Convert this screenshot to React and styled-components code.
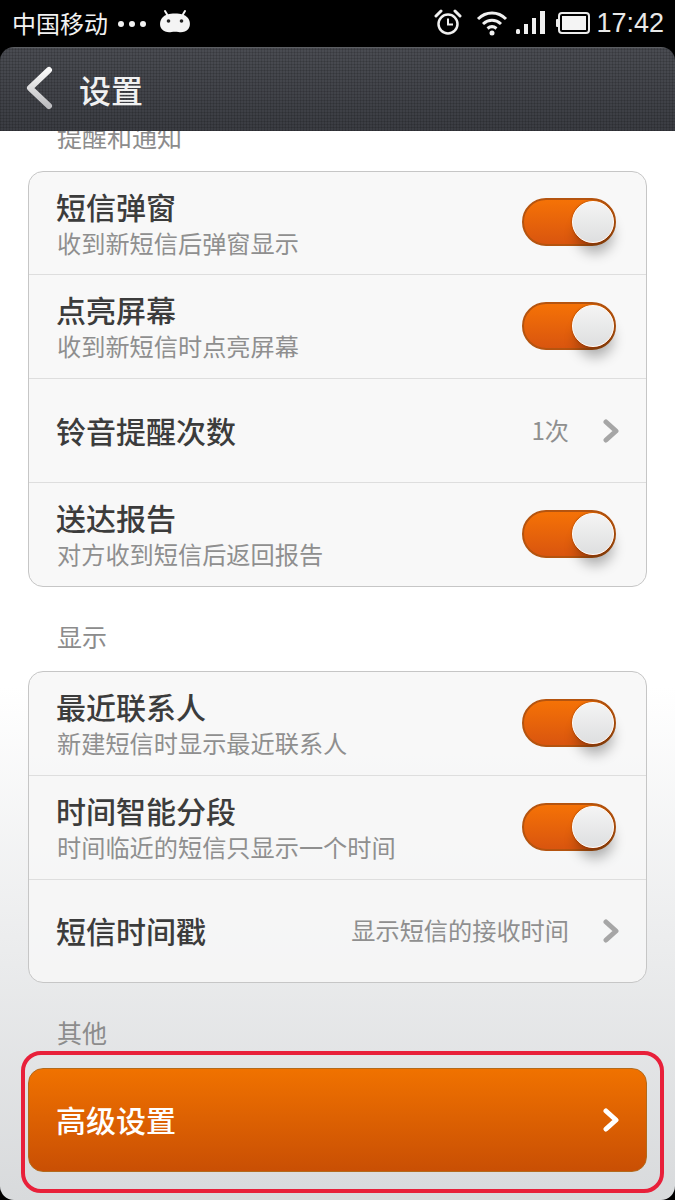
import React from 'react'
import styled, { createGlobalStyle } from 'styled-components'

const GlobalStyle = createGlobalStyle`
  html, body {
    margin: 0;
    padding: 0;
    background: #000;
  }
  * {
    box-sizing: border-box;
  }
`

const Page = styled.div`
  position: relative;
  width: 675px;
  height: 1200px;
  display: flex;
  flex-direction: column;
  background: #000;
  overflow: hidden;
  font-family: "Noto Sans CJK SC", "Liberation Sans", sans-serif;
`

const StatusBar = styled.div`
  height: 47px;
  flex: none;
  display: flex;
  align-items: center;
  padding: 0 11px 0 12px;
  color: #f2f2f2;
`
const Carrier = styled.span`
  font-size: 24px;
  line-height: 47px;
  margin-top: -2px;
`
const Dots = styled.div`
  display: flex;
  gap: 5px;
  margin-left: 10px;
`
const Dot = styled.i`
  width: 6px;
  height: 6px;
  border-radius: 50%;
  background: #f2f2f2;
`
const BotIcon = styled.svg`
  width: 34px;
  height: 26px;
  margin-left: 12px;
  margin-top: -4px;
`
const StatusRight = styled.div`
  margin-left: auto;
  display: flex;
  align-items: center;
`
const StatusIcon = styled.svg`
  display: block;
  margin-right: ${({ $gap }) => $gap}px;
  margin-top: -2px;
`
const Clock = styled.span`
  font-family: "Liberation Sans", sans-serif;
  font-size: 27px;
  line-height: 47px;
  margin-top: -1px;
  color: #e8e8e8;
`

const Screen = styled.div`
  flex: 1;
  min-height: 0;
  display: flex;
  flex-direction: column;
  border-radius: 14px;
  overflow: hidden;
`
const TitleBar = styled.div`
  height: 84px;
  flex: none;
  display: flex;
  align-items: center;
  padding-left: 26px;
  border-top: 1px solid #5c5e62;
  background:
    repeating-linear-gradient(90deg, rgba(0, 0, 0, 0.13) 0 1px, transparent 1px 3px),
    repeating-linear-gradient(0deg, rgba(0, 0, 0, 0.13) 0 1px, transparent 1px 3px),
    linear-gradient(180deg, #4a4c52 0%, #3a3c42 100%);
`
const BackIcon = styled.svg`
  width: 28px;
  height: 44px;
  display: block;
  margin-top: -3px;
`
const Title = styled.h1`
  margin: -2px 0 0 25px;
  font-size: 32px;
  line-height: 40px;
  font-weight: 500;
  color: #f1f1f1;
`

const Content = styled.div`
  flex: 1;
  min-height: 0;
  overflow: hidden;
  padding: 0 28px;
  background: linear-gradient(180deg, #fff 0%, #fff 52%, #d8dadc 100%);
  & > :first-child {
    margin-top: -44px;
  }
`
const SectionLabel = styled.div`
  height: 84px;
  padding: 32px 0 0 29px;
  font-size: 25px;
  line-height: 34px;
  color: #8c8c8c;
`
const Row = styled.div`
  height: 104px;
  display: flex;
  align-items: center;
  padding: 0 30px 0 28px;
  & + & {
    border-top: 1px solid #dedede;
  }
  &:first-child,
  &:last-child {
    height: 103px;
  }
`
const Card = styled.div`
  border: 1px solid #c6c6c6;
  border-radius: 15px;
  background: rgba(247, 247, 247, 0.85);
  ${({ $shortFirst }) =>
    $shortFirst &&
    `
    & > :first-child { height: 102px; }
    & > :last-child { height: 104px; }
  `}
`
const RowText = styled.div`
  flex: 1;
  min-width: 0;
  display: flex;
  flex-direction: column;
`
const RowTitle = styled.div`
  font-size: 30px;
  line-height: 40px;
  font-weight: 500;
  color: #3c3c3c;
  margin: ${({ $single }) => ($single ? -2 : -1)}px 0 0 -1px;
`
const RowSub = styled.div`
  font-size: 24.2px;
  line-height: 34px;
  color: #8f8f8f;
`
const RowValue = styled.span`
  font-size: 24.2px;
  line-height: 34px;
  color: #8f8f8f;
  margin: -2px 34px 0 0;
`
const Chevron = styled.svg`
  width: 16px;
  height: 24px;
  display: block;
  flex: none;
  margin-right: ${({ $shift }) => $shift}px;
`

const Toggle = styled.div`
  position: relative;
  width: 94px;
  height: 48px;
  flex: none;
  margin-top: -2px;
  border-radius: 24px;
  border: 2px solid #b5540f;
  background: linear-gradient(180deg, #f57206 0%, #d9550f 100%);
`
const Knob = styled.div`
  position: absolute;
  top: 1px;
  right: 0;
  width: 42px;
  height: 42px;
  border-radius: 50%;
  border: 1.5px solid #fff;
  background: linear-gradient(180deg, #f4f4f4 0%, #dedfe0 100%);
  box-shadow:
    0 0 2px rgba(90, 40, 0, 0.7),
    2px 13px 13px -3px rgba(0, 0, 0, 0.3);
`

const OrangeButton = styled.div`
  height: 104px;
  margin-top: 1px;
  display: flex;
  align-items: center;
  justify-content: space-between;
  padding: 0 27px 0 27px;
  border: 1px solid #b36a1c;
  border-radius: 15px;
  background: linear-gradient(180deg, #f07200 0%, #c94f04 100%);
`
const ButtonLabel = styled.span`
  font-size: 30px;
  line-height: 40px;
  font-weight: 500;
  color: #fff;
  margin-top: -2px;
`

// red annotation drawn over the screenshot
const Highlight = styled.div`
  position: absolute;
  left: 21px;
  top: 1051px;
  width: 643px;
  height: 142px;
  border: 4px solid #e8203a;
  border-radius: 20px;
  pointer-events: none;
`

const ChevronGlyph = ({ color, shift = 0 }) => (
  <Chevron $shift={shift} viewBox="0 0 16 24">
    <path d="M3 3l10 9-10 9" fill="none" stroke={color} strokeWidth="5" strokeLinecap="round" strokeLinejoin="round" />
  </Chevron>
)

const SwitchOn = () => (
  <Toggle>
    <Knob />
  </Toggle>
)

const SettingRow = ({ title, sub, value }) => (
  <Row>
    <RowText>
      <RowTitle $single={!sub}>{title}</RowTitle>
      {sub && <RowSub>{sub}</RowSub>}
    </RowText>
    {value ? (
      <>
        <RowValue>{value}</RowValue>
        <ChevronGlyph color="#a6a6a6" shift={-3} />
      </>
    ) : (
      <SwitchOn />
    )}
  </Row>
)

const App = () => {
  return (
    <Page>
      <GlobalStyle />
      <StatusBar>
        <Carrier>中国移动</Carrier>
        <Dots>
          <Dot />
          <Dot />
          <Dot />
        </Dots>
        <BotIcon viewBox="0 0 34 26">
          <path d="M10 7L7 2M24 7l3-5" stroke="#f4f4f4" strokeWidth="2" strokeLinecap="round" />
          <path d="M17 4.500c6 0 9.500 1 12.500 4 3 3.200 3.200 8.500.8 11.500-2.500 3-6.800 3.800-9.800 3-2.500-.5-4.500-.5-7 0-3 .8-7.300 0-9.800-3-2.400-3-2.200-8.300.8-11.500 3-3 6.500-4 12.500-4z" fill="#f4f4f4" />
          <circle cx="10.500" cy="12" r="1.800" fill="#222" />
          <circle cx="23.500" cy="12" r="1.800" fill="#222" />
        </BotIcon>
        <StatusRight>
          <StatusIcon $gap={14} width="28" height="28" viewBox="0 0 28 28">
            <circle cx="14" cy="15" r="9.500" fill="none" stroke="#f0f0f0" strokeWidth="2.500" />
            <path d="M14 9.500V15.500H19" fill="none" stroke="#f0f0f0" strokeWidth="2" />
            <path d="M2 7l5-5M26 7l-5-5" stroke="#f0f0f0" strokeWidth="3" strokeLinecap="round" />
          </StatusIcon>
          <StatusIcon $gap={8} width="32" height="26" viewBox="0 0 32 26">
            <path d="M2 9c8-8 20-8 28 0M7 14c5.500-5 12.500-5 18 0M11.500 18.500c3-2.500 6-2.500 9 0" fill="none" stroke="#f0f0f0" strokeWidth="3" />
            <circle cx="16" cy="23" r="2.500" fill="#f0f0f0" />
          </StatusIcon>
          <StatusIcon $gap={11} width="29" height="24" viewBox="0 0 29 24">
            <rect x="0" y="18" width="4" height="5" rx="1.500" fill="#f0f0f0" />
            <rect x="8" y="13" width="4" height="10" fill="#f0f0f0" />
            <rect x="16" y="7" width="4" height="16" fill="#f0f0f0" />
            <rect x="24" y="0" width="5" height="23" fill="#f0f0f0" />
          </StatusIcon>
          <StatusIcon $gap={6} width="34" height="22" viewBox="0 0 34 22">
            <rect x="3" y="1" width="30" height="20" rx="3" fill="none" stroke="#ececec" strokeWidth="2" />
            <rect x="0" y="7" width="3" height="8" rx="1" fill="#ececec" />
            <rect x="6" y="4" width="24" height="14" fill="#f4f4f4" />
          </StatusIcon>
          <Clock>17:42</Clock>
        </StatusRight>
      </StatusBar>

      <Screen>
        <TitleBar>
          <BackIcon viewBox="0 0 28 44">
            <defs>
              <linearGradient id="backFade" x1="0" y1="0" x2="0" y2="1">
                <stop offset="0" stopColor="#fafafa" />
                <stop offset="1" stopColor="#bdbdc0" />
              </linearGradient>
            </defs>
            <path d="M23 4L4 22l19 18" fill="none" stroke="url(#backFade)" strokeWidth="6" strokeLinecap="round" strokeLinejoin="round" />
          </BackIcon>
          <Title>设置</Title>
        </TitleBar>

        <Content>
          <SectionLabel>提醒和通知</SectionLabel>
          <Card $shortFirst>
            <SettingRow title="短信弹窗" sub="收到新短信后弹窗显示" />
            <SettingRow title="点亮屏幕" sub="收到新短信时点亮屏幕" />
            <SettingRow title="铃音提醒次数" value="1次" />
            <SettingRow title="送达报告" sub="对方收到短信后返回报告" />
          </Card>

          <SectionLabel>显示</SectionLabel>
          <Card>
            <SettingRow title="最近联系人" sub="新建短信时显示最近联系人" />
            <SettingRow title="时间智能分段" sub="时间临近的短信只显示一个时间" />
            <SettingRow title="短信时间戳" value="显示短信的接收时间" />
          </Card>

          <SectionLabel>其他</SectionLabel>
          <OrangeButton>
            <ButtonLabel>高级设置</ButtonLabel>
            <ChevronGlyph color="#fff" />
          </OrangeButton>
        </Content>
      </Screen>
      <Highlight />
    </Page>
  )
}

export default App
